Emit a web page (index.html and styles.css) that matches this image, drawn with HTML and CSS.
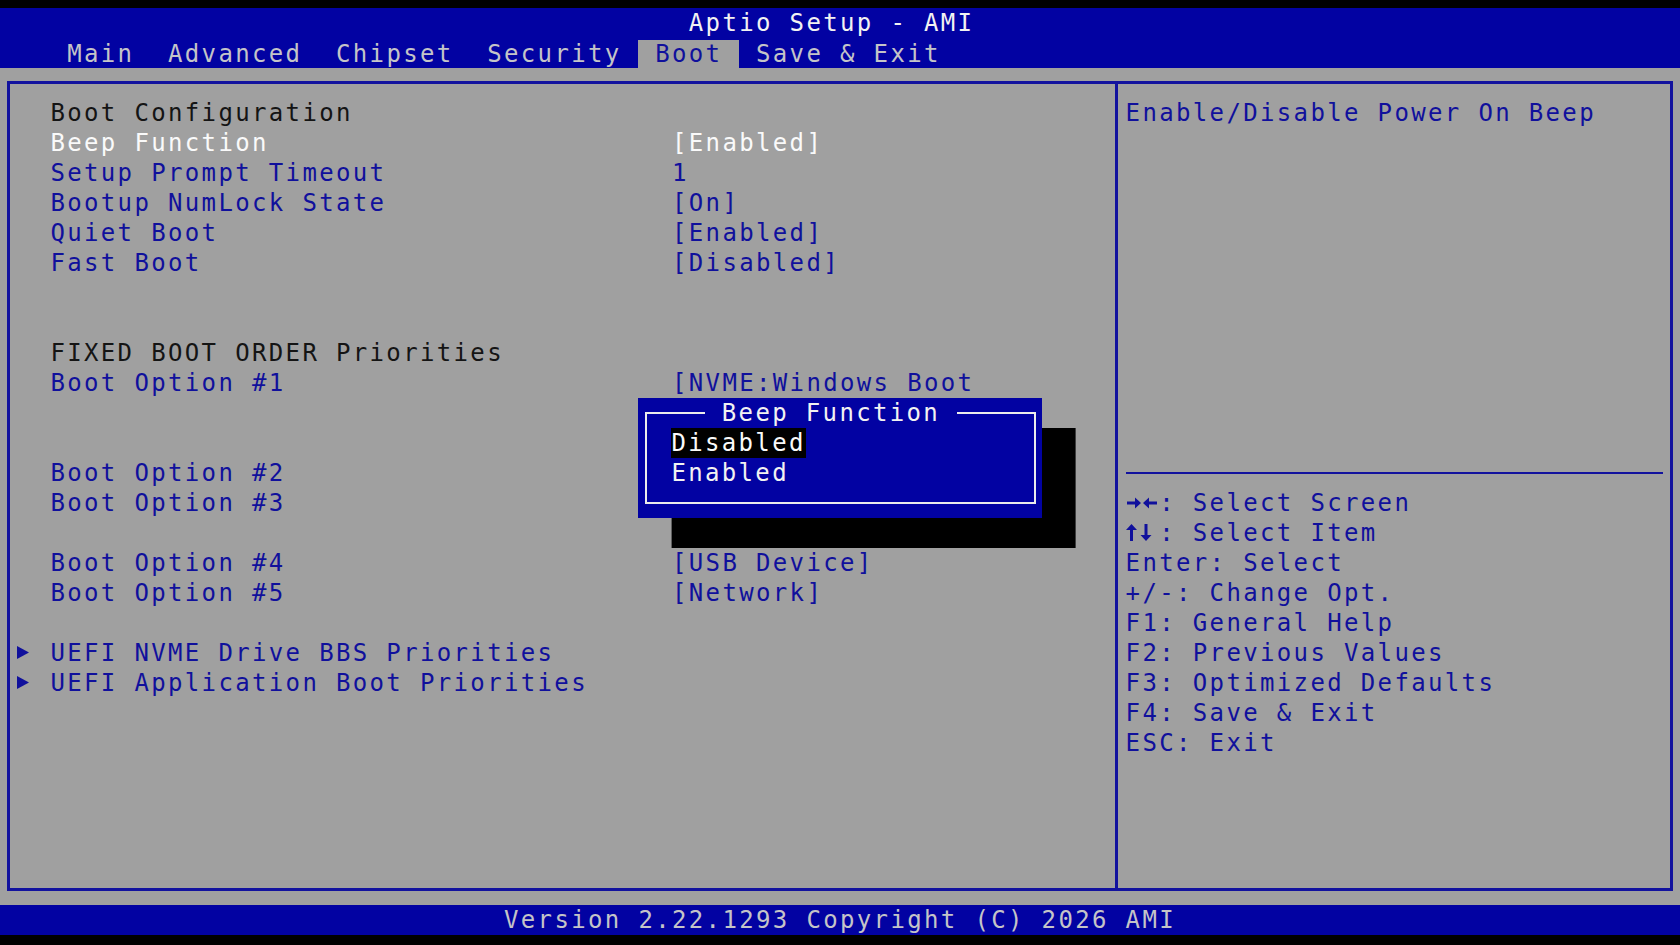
FILE: index.html
```html
<!DOCTYPE html>
<html lang="en">
<head>
    <meta charset="UTF-8">
    <meta name="viewport" content="width=device-width, initial-scale=1.0">
    <title>Aptio Setup - AMI</title>
    <link rel="stylesheet" href="styles.css">
</head>
<body>
    <div class="screen">
        <div class="edge-top"></div>

        <header class="header">
            <div class="title">Aptio Setup - AMI</div>
            <nav class="tabs">
                <span class="tab">Main</span>
                <span class="tab">Advanced</span>
                <span class="tab">Chipset</span>
                <span class="tab">Security</span>
                <span class="tab active">Boot</span>
                <span class="tab">Save &amp; Exit</span>
            </nav>
        </header>

        <main class="content">
            <div class="panel">
                <section class="setup">
                    <div class="row"><span></span><span class="heading">Boot Configuration</span></div>
                    <div class="row selected"><span></span><span>Beep Function</span><span>[Enabled]</span></div>
                    <div class="row"><span></span><span>Setup Prompt Timeout</span><span>1</span></div>
                    <div class="row"><span></span><span>Bootup NumLock State</span><span>[On]</span></div>
                    <div class="row"><span></span><span>Quiet Boot</span><span>[Enabled]</span></div>
                    <div class="row"><span></span><span>Fast Boot</span><span>[Disabled]</span></div>
                    <div class="row"></div>
                    <div class="row"></div>
                    <div class="row"><span></span><span class="heading">FIXED BOOT ORDER Priorities</span></div>
                    <div class="row"><span></span><span>Boot Option #1</span><span>[NVME:Windows Boot</span></div>
                    <div class="row"></div>
                    <div class="row"></div>
                    <div class="row"><span></span><span>Boot Option #2</span></div>
                    <div class="row"><span></span><span>Boot Option #3</span></div>
                    <div class="row"></div>
                    <div class="row"><span></span><span>Boot Option #4</span><span>[USB Device]</span></div>
                    <div class="row"><span></span><span>Boot Option #5</span><span>[Network]</span></div>
                    <div class="row"></div>
                    <div class="row">
                        <span class="marker"><svg width="14" height="15" viewBox="0 0 14 15"><polygon points="1,1 13,7.5 1,14" fill="#10109c"/></svg></span>
                        <span>UEFI NVME Drive BBS Priorities</span>
                    </div>
                    <div class="row">
                        <span class="marker"><svg width="14" height="15" viewBox="0 0 14 15"><polygon points="1,1 13,7.5 1,14" fill="#10109c"/></svg></span>
                        <span>UEFI Application Boot Priorities</span>
                    </div>
                </section>

                <aside class="help">
                    <div class="help-text">Enable/Disable Power On Beep</div>
                    <div class="divider"></div>
                    <div class="keys">
                        <div><svg class="arrows" width="33" height="30" viewBox="0 0 33 30">
                            <path d="M1 13.5h8v-4l6 5.5-6 5.5v-4h-8z" fill="#10109c"/>
                            <path d="M31 13.5h-8v-4l-6 5.5 6 5.5v-4h8z" fill="#10109c"/>
                        </svg>: Select Screen</div>
                        <div><svg class="arrows" width="33" height="30" viewBox="0 0 33 30">
                            <path d="M5.5 6l5.5 6h-4v11h-3v-11h-4z" fill="#10109c"/>
                            <path d="M20 23l5.5-6h-4v-11h-3v11h-4z" fill="#10109c"/>
                        </svg>: Select Item</div>
                        <div>Enter: Select</div>
                        <div>+/-: Change Opt.</div>
                        <div>F1: General Help</div>
                        <div>F2: Previous Values</div>
                        <div>F3: Optimized Defaults</div>
                        <div>F4: Save &amp; Exit</div>
                        <div>ESC: Exit</div>
                    </div>
                </aside>
            </div>
        </main>

        <footer class="footer">Version 2.22.1293 Copyright (C) 2026 AMI</footer>
        <div class="edge-bottom"></div>

        <!-- option dialog over the value column -->
        <div class="popup">
            <div class="frame">
                <div class="frame-title">Beep Function</div>
                <div class="option"><span class="pick">Disabled</span></div>
                <div class="option">Enabled</div>
            </div>
        </div>
    </div>
</body>
</html>
```

FILE: styles.css
```css
body {
    margin: 0;
    background: #000;
    font-family: "DejaVu Sans Mono", "Liberation Mono", monospace;
    font-size: 24px;
    letter-spacing: 2.35px;
}
.screen {
    position: relative;
    width: 1680px;
    height: 945px;
    display: flex;
    flex-direction: column;
    overflow: hidden;
}
.edge-top {
    height: 8px;
    background: #000;
}
.edge-bottom {
    height: 10px;
    background: #000;
}
.header {
    height: 60px;
    background: #0202a2;
}
.title {
    height: 30px;
    line-height: 30px;
    text-align: center;
    padding-right: 16.8px;
    color: #f2f2f2;
    white-space: pre;
}
.tabs {
    height: 30px;
    display: flex;
    align-items: flex-end;
    padding-left: 50.4px;
}
.tab {
    height: 28px;
    line-height: 28px;
    padding: 0 16.8px;
    color: #c4c4c8;
    white-space: pre;
}
.tab.active {
    background: #a0a0a0;
    color: #10109c;
}
.content {
    height: 837px;
    box-sizing: border-box;
    padding: 13px 7px 14px 7px;
    background: #a0a0a0;
}
.panel {
    height: 810px;
    box-sizing: border-box;
    border: 3px solid #12129e;
    display: grid;
    grid-template-columns: 1105px 555px;
}
.setup {
    padding-top: 14px;
}
.row {
    display: grid;
    grid-template-columns: 40.4px 621.6px 1fr;
    height: 30px;
    line-height: 30px;
    color: #10109c;
    white-space: pre;
}
.row.selected {
    color: #fafafa;
}
.heading {
    color: #141414;
}
.marker {
    display: flex;
    align-items: center;
    padding-left: 6px;
    padding-bottom: 2px;
}
.help {
    border-left: 3px solid #12129e;
    padding-top: 14px;
    color: #10109c;
}
.help-text {
    height: 360px;
    line-height: 30px;
    padding-left: 7.6px;
}
.divider {
    height: 2px;
    margin: 14px 7px 14px 7.6px;
    background: #12129e;
}
.keys {
    padding-left: 7.6px;
    line-height: 30px;
}
.keys div {
    height: 30px;
    white-space: pre;
}
.arrows {
    vertical-align: top;
    margin-right: 0.6px;
}
.footer {
    height: 30px;
    line-height: 30px;
    background: #0202a2;
    color: #c4c4c8;
    text-align: center;
    white-space: pre;
}
.popup {
    position: absolute;
    left: 638.4px;
    top: 398px;
    width: 403.2px;
    height: 120px;
    box-sizing: border-box;
    padding: 14px 5.6px 0 6.6px;
    background: #0202a2;
    box-shadow: 33.6px 30px 0 #000;
    color: #f2f2f2;
}
.frame {
    height: 92px;
    box-sizing: border-box;
    border: 2px solid #ececec;
}
.frame-title {
    width: fit-content;
    margin: -16px 0 0 58px;
    padding: 0 16.8px;
    line-height: 30px;
    background: #0202a2;
    white-space: pre;
}
.option {
    line-height: 30px;
    padding-left: 24.4px;
    white-space: pre;
}
.pick {
    display: inline-block;
    background: #000;
    color: #fafafa;
}
```
